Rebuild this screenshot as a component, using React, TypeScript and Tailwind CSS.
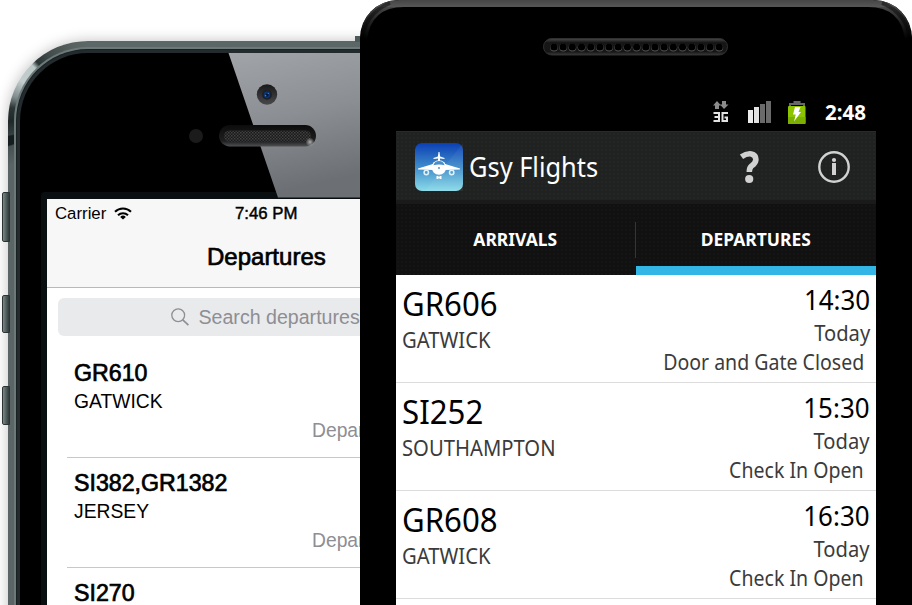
import React from "react";

const iosFlights = [
  { code: "GR610", place: "GATWICK" },
  { code: "SI382,GR1382", place: "JERSEY" },
  { code: "SI270", place: "" },
];

const androidFlights = [
  { code: "GR606", place: "GATWICK", time: "14:30", status: "Door and Gate Closed" },
  { code: "SI252", place: "SOUTHAMPTON", time: "15:30", status: "Check In Open" },
  { code: "GR608", place: "GATWICK", time: "16:30", status: "Check In Open" },
];

function WifiIcon() {
  return (
    <svg width="18" height="14" viewBox="0 0 18 14" fill="none" stroke="#000">
      <path d="M1 4.800a11.300 11.300 0 0 1 16 0" strokeWidth="2" />
      <path d="M4 8.200a7.100 7.100 0 0 1 10 0" strokeWidth="2" />
      <path d="M9 12.600 6.200 9.900a4 4 0 0 1 5.600 0Z" fill="#000" stroke="none" />
    </svg>
  );
}

function SearchIcon() {
  return (
    <svg width="18" height="18" viewBox="0 0 18 18" fill="none" stroke="#8e8e93" strokeWidth="1.3">
      <circle cx="7.2" cy="7.2" r="6.4" />
      <path d="m11.8 11.8 5.6 5.4" strokeWidth="1.6" />
    </svg>
  );
}

function IosEarpiece() {
  return (
    <svg className="absolute left-[180px] top-[78px]" width="142" height="72" viewBox="180 78 142 72">
      <defs>
        <linearGradient id="slot" x1="0" y1="0" x2="0" y2="1">
          <stop offset="0" stopColor="#0c0c0d" />
          <stop offset="0.75" stopColor="#1f1f20" />
          <stop offset="1" stopColor="#505254" />
        </linearGradient>
        <linearGradient id="lens" x1="0" y1="0" x2="0" y2="1">
          <stop offset="0" stopColor="#19191a" />
          <stop offset="1" stopColor="#49494b" />
        </linearGradient>
        <radialGradient id="glint">
          <stop offset="0" stopColor="#b0b0b0" />
          <stop offset="1" stopColor="#b0b0b0" stopOpacity="0" />
        </radialGradient>
        <pattern id="mesh" width="3" height="3" patternUnits="userSpaceOnUse">
          <rect width="3" height="3" fill="#1a1a1a" />
          <rect width="1.5" height="1.5" fill="#424242" />
          <rect x="1.5" y="1.5" width="1.5" height="1.5" fill="#3a3a3a" />
        </pattern>
      </defs>
      <circle cx="196" cy="136" r="7" fill="#1b1b1c" />
      <circle cx="267" cy="94.5" r="10.2" fill="url(#lens)" />
      <circle cx="267" cy="94.7" r="5" fill="#1d2026" />
      <circle cx="267" cy="94.8" r="3.2" fill="#0a3577" />
      <circle cx="267" cy="95" r="1.5" fill="#041633" />
      <circle cx="265.6" cy="95.6" r="0.8" fill="#2f86e8" />
      <circle cx="268.4" cy="93.4" r="0.7" fill="#2f70c8" />
      <rect x="219" y="125" width="97" height="21.5" rx="10.7" fill="url(#slot)" />
      <rect x="224" y="130.5" width="87" height="11" rx="5.5" fill="url(#mesh)" />
      <circle cx="310" cy="142" r="4.5" fill="url(#glint)" />
    </svg>
  );
}

function IosPhone() {
  return (
    <section className="relative h-[605px] w-[360px] shrink-0 overflow-hidden bg-white font-['Liberation_Sans',Arial,sans-serif]">
      <i className="absolute left-[2px] top-[192px] h-[50px] w-[8px] rounded-l-[2px] border border-[#2c3536] bg-linear-to-r from-[#7c8888] to-[#2f393a]" />
      <i className="absolute left-[2px] top-[295px] h-[38px] w-[8px] rounded-l-[2px] border border-[#2c3536] bg-linear-to-r from-[#7c8888] to-[#2f393a]" />
      <i className="absolute left-[2px] top-[386px] h-[39px] w-[8px] rounded-l-[2px] border border-[#2c3536] bg-linear-to-r from-[#7c8888] to-[#2f393a]" />
      <i className="absolute left-[355px] top-[36px] h-[6px] w-[8px] bg-[#4d5959]" />

      <div className="ml-[8px] mt-[41px] h-[600px] w-[500px] rounded-tl-[80px] bg-[conic-gradient(from_0deg_at_80px_80px,#5c6867_0deg,#5a6465_240deg,#465051_252deg,#151d1f_253deg,#151d1f_259deg,#344041_260deg,#1f2829_270deg,#2c3637_280deg,#7f8b8c_288deg,#c3cdce_301deg,#bcc7c8_315deg,#2b3434_319deg,#424c4c_330deg,#57625f_348deg,#5c6867_360deg)] p-[6px] shadow-[0_0_14px_rgba(0,0,0,0.25)]">
        <div className="h-full rounded-tl-[74px] bg-[#6d7978] pl-[2px] pt-[2px]">
          <div className="h-full rounded-tl-[72px] bg-[#182022] pl-[1px] pt-[1px]">
            <div className="h-full rounded-tl-[71px] bg-[#232b2e] pl-[3px] pt-[3px]">
              <div className="h-full rounded-tl-[68px] bg-black pl-[21px] pt-[139px]">
                <div className="h-full rounded-tl-[4px] bg-[#090e10] pl-[6px] pt-[7px]">
                  <IosScreen />
                </div>
              </div>
            </div>
          </div>
        </div>
      </div>

      <svg className="absolute left-[228px] top-[53px]" width="132" height="145" viewBox="0 0 132 145">
        <defs>
          <linearGradient id="glare" x1="0" y1="0" x2="0.2" y2="1">
            <stop offset="0" stopColor="#a1a4a9" />
            <stop offset="0.5" stopColor="#8b8e93" />
            <stop offset="1" stopColor="#6c7074" />
          </linearGradient>
        </defs>
        <path d="M0.5 0H132V144.500H50Z" fill="url(#glare)" />
      </svg>
      <IosEarpiece />
    </section>
  );
}

function IosScreen() {
  return (
    <div className="h-full w-[440px] bg-white text-black">
      <header className="h-[89px] border-b border-[#b9b9bc] bg-[#f7f7f8]">
        <div className="flex h-[29px] items-center pl-[8px] text-[16.8px] leading-[29px]">
          <span className="w-[52px]">Carrier</span>
          <span className="ml-[7px] w-[18px]"><WifiIcon /></span>
          <span className="ml-[103px] whitespace-nowrap [-webkit-text-stroke:0.45px_#000]">7:46 PM</span>
        </div>
        <h1 className="pl-[160px] text-[24px] leading-[58px] [-webkit-text-stroke:0.7px_#000]">Departures</h1>
      </header>
      <div className="ml-[11px] mt-[10px] flex h-[38px] items-center rounded-[6px] bg-[#e9eaec] pl-[113px] text-[19.6px] text-[#8e8e93]">
        <SearchIcon />
        <span className="ml-[9.500px] whitespace-nowrap pt-[2px]">Search departures</span>
      </div>
      <ul className="mt-[12px] pl-[20px]">
        {iosFlights.map((f) => (
          <li key={f.code} className="h-[110px] border-b border-[#c8c7cc] pl-[7px] pt-[11px]">
            <p className="text-[23.2px] leading-[28px] [-webkit-text-stroke:0.7px_#000]">{f.code}</p>
            <p className="h-[29px] text-[19.3px] leading-[29px]">{f.place}</p>
            <p className="pl-[238px] text-[19.3px] leading-[29px] text-[#8e8e93]">Departed</p>
          </li>
        ))}
      </ul>
    </div>
  );
}

function PlaneLogo() {
  return (
    <svg className="mt-[2px]" width="48" height="48" viewBox="0 0 48 48">
      <defs>
        <linearGradient id="sky" x1="0" y1="0" x2="0" y2="1">
          <stop offset="0" stopColor="#0b3fb4" />
          <stop offset="0.5" stopColor="#3f8ccb" />
          <stop offset="1" stopColor="#8adbe8" />
        </linearGradient>
      </defs>
      <rect width="48" height="48" rx="7" fill="url(#sky)" />
      <path d="M48 0v48H10Z" fill="#fff" opacity="0.05" />
      <path d="M23.500 9h1l.6 4.500 4.400 1.500v1l-4.500-.4v2.500h-2v-2.500l-4.500.4v-1l4.400-1.500Z" fill="#fff" />
      <path d="M18 21 3 25.500v1l15 .5ZM30 21l15 4.500v1l-15 .5Z" fill="#fff" />
      <circle cx="24" cy="24.500" r="7.300" fill="#fff" />
      <path d="M18.400 22.300a5.800 5.800 0 0 1 11.200 0q-5.600-1.600-11.200 0Z" fill="#4b8fc9" />
      <circle cx="24" cy="25" r="0.9" fill="#3f8ccb" />
      <g fill="none" stroke="#dff2fa" strokeWidth="1.500">
        <circle cx="11.300" cy="29.500" r="2.200" />
        <circle cx="36.700" cy="29.500" r="2.200" />
      </g>
      <path d="M21.500 33h2v1h1v-1h2v3h-2v-1h-1v1h-2Z" fill="#fff" />
    </svg>
  );
}

function NetworkIcon() {
  return (
    <svg width="16" height="24" viewBox="0 0 16 24">
      <path d="M0 5.500 4 1l4 4.500H6V9H2V5.500ZM7 4.500H9V1h4v3.500h2.500L11 9Z" fill="#8b8b8b" />
      <g fill="none" stroke="#e3e3e3" strokeWidth="2">
        <path d="M0.500 13H6v8H0.500M1.500 17H6" />
        <path d="M15 13H9.500v8H14v-3.500h-2.500" />
      </g>
    </svg>
  );
}

function SignalIcon() {
  return (
    <svg width="24" height="22" viewBox="0 0 24 22">
      <rect x="0" y="9" width="5" height="13" fill="#ececec" />
      <rect x="6" y="6" width="5" height="16" fill="#e2e2e2" />
      <rect x="12" y="3" width="5" height="19" fill="#6a6a6a" />
      <rect x="18" y="0" width="5" height="22" fill="#6a6a6a" />
    </svg>
  );
}

function BatteryIcon() {
  return (
    <svg width="18" height="24" viewBox="0 0 18 24">
      <path d="M1 6V3h4.500V1h7v2H17v3h-2V5H3v1Z" fill="#686868" />
      <rect x="0" y="6" width="17.500" height="18" rx="1" fill="#8cc400" />
      <path d="M0 17h17.500v6q0 1-1 1H1q-1 0-1-1Z" fill="#7cb000" />
      <path d="M7 7h5.500L10.500 12H13L6 21.500l1.800-7H5Z" fill="#fff" />
    </svg>
  );
}

function SpeakerGrille() {
  return (
    <svg width="186" height="18" viewBox="0 0 186 18">
      <defs>
        <linearGradient id="grille" x1="0" y1="0" x2="0" y2="1">
          <stop offset="0" stopColor="#4a4a4a" />
          <stop offset="0.25" stopColor="#161616" />
          <stop offset="0.8" stopColor="#161616" />
          <stop offset="1" stopColor="#3d3d3d" />
        </linearGradient>
      </defs>
      <rect x="0.500" y="0.500" width="184" height="16.500" rx="8.200" fill="url(#grille)" stroke="#303030" />
      {Array.from({ length: 19 }, (_, i) => (
        <g key={i}>
          <circle cx={11 + i * 9.18} cy="9.600" r="3.900" fill="#555" />
          <circle cx={11 + i * 9.18} cy="9" r="3.600" fill="#000" />
        </g>
      ))}
    </svg>
  );
}

function AndroidPhone() {
  return (
    <section className="relative h-[605px] w-[552px] shrink-0 overflow-hidden rounded-t-[38px] bg-black pl-[36px] font-['Noto_Sans',sans-serif]">
      <svg className="absolute left-0 top-0" width="552" height="46" viewBox="0 0 552 46">
        <defs>
          <linearGradient id="rim" x1="0" y1="0" x2="0" y2="1">
            <stop offset="0" stopColor="#454545" />
            <stop offset="0.140" stopColor="#565656" />
            <stop offset="0.160" stopColor="#464646" />
            <stop offset="0.450" stopColor="#242424" />
            <stop offset="0.850" stopColor="#000" />
          </linearGradient>
        </defs>
        <path d="M0 46Q0 0 40 0H512Q552 0 552 46L545 40Q541 7 508 7H44Q11 7 7 40Z" fill="url(#rim)" />
        <path d="M1.500 44Q3 14 30 3M550.500 44Q549 14 522 3" fill="none" stroke="#000" strokeWidth="4" opacity="0.45" />
      </svg>
      <div className="flex h-[93px] pl-[147px] pt-[38px]"><SpeakerGrille /></div>
      <div className="flex h-[38px] w-[480px] items-center justify-end pr-[9px] text-[20.500px] font-bold text-white">
        <NetworkIcon />
        <span className="ml-[19px]"><SignalIcon /></span>
        <span className="ml-[16px]"><BatteryIcon /></span>
        <span className="ml-[19px] w-[42px] whitespace-nowrap leading-[38px]">2:48</span>
      </div>
      <div className="w-[480px]">
        <header className="flex h-[73px] items-center border-b-4 border-t border-b-[#1a1a1a] border-t-[#2d292a] bg-[#202222] bg-[radial-gradient(#242626_0.700px,transparent_1px)] bg-[size:4px_4px] pl-[19px]">
          <PlaneLogo />
          <h1 className="ml-[6px] w-[270px] origin-left scale-x-[0.94] whitespace-nowrap pt-[1px] text-[27px] leading-[40px] text-white">Gsy Flights</h1>
          <svg className="mt-[1px]" width="20" height="34" viewBox="0 0 20 34">
            <path d="M2.500 6.800Q7.500 3.200 12.300 3.900 17.300 5 16.800 10.300 16.300 13.500 12.500 16 10.300 17.700 10.300 22" fill="none" stroke="#d1d1d1" strokeWidth="5.600" />
            <circle cx="10.200" cy="29" r="4.100" fill="#d1d1d1" />
          </svg>
          <svg className="ml-[58px] mt-[2px]" width="34" height="34" viewBox="0 0 34 34">
            <circle cx="17" cy="17" r="14.700" fill="none" stroke="#d1d1d1" strokeWidth="2.400" />
            <path d="M15 13h4v12h-4Z" fill="#d1d1d1" />
            <circle cx="17" cy="10" r="2.100" fill="#d1d1d1" />
          </svg>
        </header>
        <nav className="flex h-[71px] bg-[#111] bg-[radial-gradient(#151515_0.700px,transparent_1px)] bg-[size:4px_4px] text-[18px] font-bold text-white">
          <div className="flex w-[240px] items-center">
            <span className="w-[239px] text-center leading-[71px]"><span className="inline-block scale-x-[0.97]">ARRIVALS</span></span>
            <i className="h-[36px] w-px bg-[#353535]" />
          </div>
          <div className="w-[240px] border-b-9 border-[#33b5e5] text-center leading-[71px]"><span className="inline-block scale-x-[0.97]">DEPARTURES</span></div>
        </nav>
        <ul className="h-[330px] bg-white">
          {androidFlights.map((f) => (
            <li key={f.code} className="flex h-[108px] justify-between border-b border-[#dcdcdc] px-[6px] pt-[7px]">
              <div className="whitespace-nowrap">
                <p className="origin-left scale-x-[0.975] text-[32px] leading-[44px] text-black">{f.code}</p>
                <p className="origin-left scale-x-[0.92] text-[22px] leading-[27px] text-[#3b3b3b]">{f.place}</p>
              </div>
              <div className="whitespace-nowrap text-right text-[21px] leading-[29px] text-[#3b3b3b]">
                <p className="h-[37px] origin-right scale-x-[0.96] text-[27px] leading-[35px] text-black">{f.time}</p>
                <p className="origin-right scale-x-[0.96]">Today</p>
                <p className="mr-[6px] origin-right scale-x-[0.93]">{f.status}</p>
              </div>
            </li>
          ))}
        </ul>
      </div>
    </section>
  );
}

export default function App() {
  return (
    <main className="flex h-[605px] w-[912px] overflow-hidden bg-white">
      <IosPhone />
      <AndroidPhone />
    </main>
  );
}
